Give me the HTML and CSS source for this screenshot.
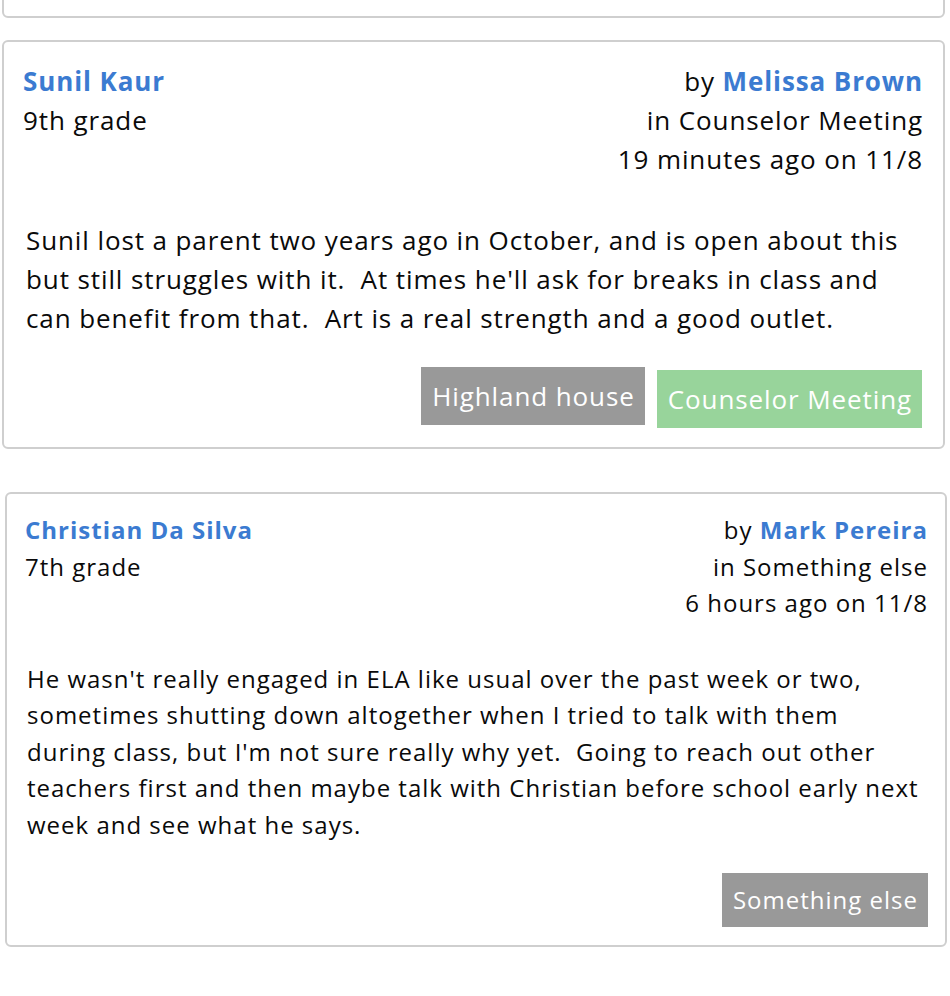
FILE: index.html
```html
<!DOCTYPE html>
<html lang="en">
<head>
<meta charset="utf-8">
<title>Notes</title>
<link rel="stylesheet" href="styles.css">
</head>
<body>
<div class="feed">
  <div class="card card--clipped"></div>

  <article class="card card--lg">
    <header class="card__head">
      <div class="card__who">
        <a class="link">Sunil Kaur</a>
        <div>9th grade</div>
      </div>
      <div class="card__meta">
        <div>by <a class="link">Melissa Brown</a></div>
        <div>in Counselor Meeting</div>
        <div>19 minutes ago on 11/8</div>
      </div>
    </header>
    <p class="card__body">Sunil lost a parent two years ago in October, and is open about this<br>but still struggles with it.&nbsp; At times he'll ask for breaks in class and<br>can benefit from that.&nbsp; Art is a real strength and a good outlet.</p>
    <div class="card__tags">
      <span class="tag tag--gray">Highland house</span>
      <span class="tag tag--green">Counselor Meeting</span>
    </div>
  </article>

  <article class="card card--md">
    <header class="card__head">
      <div class="card__who">
        <a class="link">Christian Da Silva</a>
        <div>7th grade</div>
      </div>
      <div class="card__meta">
        <div>by <a class="link">Mark Pereira</a></div>
        <div>in Something else</div>
        <div>6 hours ago on 11/8</div>
      </div>
    </header>
    <p class="card__body">He wasn't really engaged in ELA like usual over the past week or two,<br>sometimes shutting down altogether when I tried to talk with them<br>during class, but I'm not sure really why yet.&nbsp; Going to reach out other<br>teachers first and then maybe talk with Christian before school early next<br>week and see what he says.</p>
    <div class="card__tags">
      <span class="tag tag--gray">Something else</span>
    </div>
  </article>
</div>
</body>
</html>
```

FILE: styles.css
```css
* { box-sizing: border-box; }

html, body {
  margin: 0;
  padding: 0;
  background: #fff;
}

body {
  font-family: "Open Sans", "Noto Sans", "Liberation Sans", sans-serif;
  color: #0a0a0a;
  overflow: hidden;
}

.feed {
  display: flex;
  flex-direction: column;
  align-items: flex-start;
}

.card {
  background: #fff;
  border: 2px solid #cfcfcf;
  border-radius: 6px;
}

.card--clipped {
  margin-top: -100px;
  margin-left: 2px;
  width: 943px;
  height: 118px;
  margin-bottom: 22px;
}

.card--lg {
  margin-left: 2px;
  width: 943px;
  padding: 20px 20px 19px 19px;
  font-size: 26px;
  line-height: 39px;
  letter-spacing: 0.9px;
  margin-bottom: 43px;
}

.card--md {
  margin-left: 5px;
  width: 942px;
  padding: 18px 17px 18px 18px;
  font-size: 24px;
  line-height: 36.5px;
  letter-spacing: 1px;
}

.card__head {
  display: flex;
  justify-content: space-between;
  align-items: flex-start;
}

.card__meta {
  text-align: right;
}

.link {
  color: #3b7bd1;
  font-weight: 700;
  text-decoration: none;
}

.card__body {
  margin: 0;
  padding-left: 3px;
  white-space: nowrap;
}

.card--lg .card__body { margin-top: 42px; }
.card--md .card__body { margin-top: 39px; padding-left: 2px; }

.card__tags {
  display: flex;
  justify-content: flex-end;
  align-items: flex-start;
  gap: 12px;
}

.card--lg .card__tags { margin-top: 29px; margin-right: 1px; }
.card--md .card__tags { margin-top: 30px; }

.tag {
  color: #fff;
  display: inline-block;
}

.card--lg .tag { padding: 9.5px 10px 9.5px 11px; }
.card--md .tag { padding: 9px 10px 9px 10.5px; line-height: 36px; }

.tag--gray { background: #999999; }
.tag--green { background: #98d49b; margin-top: 3px; }
```
